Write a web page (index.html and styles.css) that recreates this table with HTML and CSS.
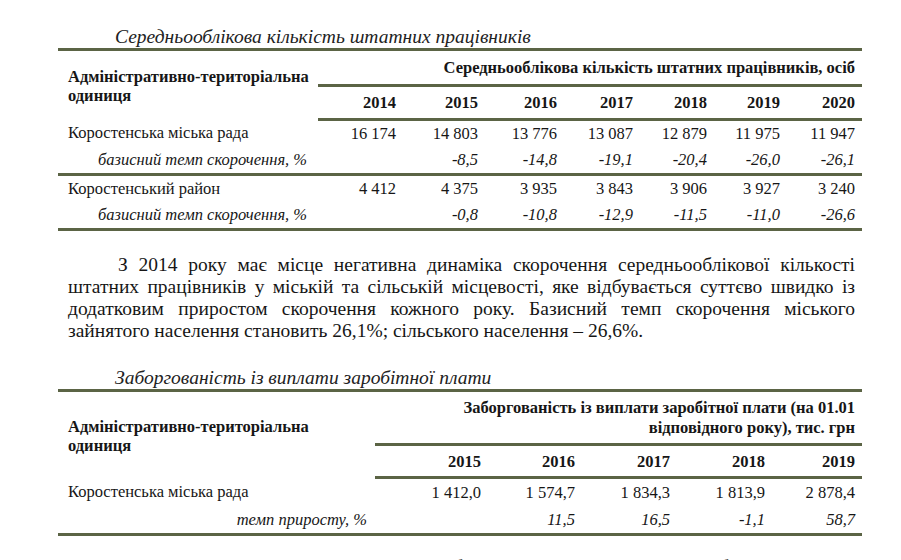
FILE: index.html
```html
<!DOCTYPE html>
<html lang="uk">
<head>
<meta charset="utf-8">
<title>Таблиці</title>
<link rel="stylesheet" href="styles.css">
</head>
<body>
<div class="page">
  <div class="caption cap1">Середньооблікова кількість штатних працівників</div>
  <table class="tbl t1">
    <colgroup>
      <col class="c-unit1">
      <col style="width:85px"><col style="width:82px"><col style="width:79px"><col style="width:76px"><col style="width:74px"><col style="width:73px"><col style="width:75px">
    </colgroup>
    <thead>
      <tr class="h1">
        <th class="unit" rowspan="2">Адміністративно-територіальна<br>одиниця</th>
        <th class="group" colspan="7">Середньооблікова кількість штатних працівників, осіб</th>
      </tr>
      <tr class="h2">
        <th>2014</th><th>2015</th><th>2016</th><th>2017</th><th>2018</th><th>2019</th><th>2020</th>
      </tr>
    </thead>
    <tbody>
      <tr class="r">
        <td class="name">Коростенська міська рада</td>
        <td>16 174</td><td>14 803</td><td>13 776</td><td>13 087</td><td>12 879</td><td>11 975</td><td>11 947</td>
      </tr>
      <tr class="r sub sep">
        <td class="name">базисний темп скорочення, %</td>
        <td></td><td>-8,5</td><td>-14,8</td><td>-19,1</td><td>-20,4</td><td>-26,0</td><td>-26,1</td>
      </tr>
      <tr class="r">
        <td class="name">Коростенський район</td>
        <td>4 412</td><td>4 375</td><td>3 935</td><td>3 843</td><td>3 906</td><td>3 927</td><td>3 240</td>
      </tr>
      <tr class="r sub last">
        <td class="name">базисний темп скорочення, %</td>
        <td></td><td>-0,8</td><td>-10,8</td><td>-12,9</td><td>-11,5</td><td>-11,0</td><td>-26,6</td>
      </tr>
    </tbody>
  </table>

  <div class="para">
    <span class="ln first">З 2014 року має місце негативна динаміка скорочення середньооблікової кількості</span>
    <span class="ln">штатних працівників у міській та сільській місцевості, яке відбувається суттєво швидко із</span>
    <span class="ln">додатковим приростом скорочення кожного року. Базисний темп скорочення міського</span>
    <span class="ln end">зайнятого населення становить 26,1%; сільського населення – 26,6%.</span>
  </div>

  <div class="caption cap2">Заборгованість із виплати заробітної плати</div>
  <table class="tbl t2">
    <colgroup>
      <col class="c-unit2">
      <col style="width:113px"><col style="width:94px"><col style="width:95px"><col style="width:95px"><col style="width:90px">
    </colgroup>
    <thead>
      <tr class="h1">
        <th class="unit" rowspan="2">Адміністративно-територіальна<br>одиниця</th>
        <th class="group" colspan="5">Заборгованість із виплати заробітної плати (на 01.01<br>відповідного року), тис. грн</th>
      </tr>
      <tr class="h2">
        <th>2015</th><th>2016</th><th>2017</th><th>2018</th><th>2019</th>
      </tr>
    </thead>
    <tbody>
      <tr class="r">
        <td class="name">Коростенська міська рада</td>
        <td>1 412,0</td><td>1 574,7</td><td>1 834,3</td><td>1 813,9</td><td>2 878,4</td>
      </tr>
      <tr class="r sub last">
        <td class="name right">темп приросту, %</td>
        <td></td><td>11,5</td><td>16,5</td><td>-1,1</td><td>58,7</td>
      </tr>
    </tbody>
  </table>

  <div class="para tail">
    <span class="ln first">Протягом досліджуваного періоду заборгованість із виплати заробітної плати у</span>
  </div>
</div>
</body>
</html>
```

FILE: styles.css
```css
html, body {
  margin: 0;
  padding: 0;
  background: #ffffff;
}
body {
  font-family: "Liberation Serif", "Tinos", "Times New Roman", serif;
  color: #161616;
  height: 560px;
  overflow: hidden;
}
.page {
  width: 804px;
  padding: 26px 0 0 58px;
}
.caption {
  font-style: italic;
  font-size: 19.5px;
  line-height: 22px;
  height: 22px;
  padding-left: 57px;
  color: #222;
}
.cap2 {
  margin-top: 25px;
}
.tbl {
  width: 804px;
  border-collapse: collapse;
  table-layout: fixed;
  border-top: 3px solid #5b6445;
  font-size: 16.5px;
}
.c-unit1 { width: 260px; }
.c-unit2 { width: 317px; }
.tbl th {
  font-weight: bold;
  font-size: 16.5px;
  text-align: right;
  padding: 0 7px 0 0;
  line-height: 19px;
}
.tbl th.unit {
  text-align: left;
  padding-left: 10px;
  vertical-align: middle;
  line-height: 19px;
  padding-top: 2px;
}
.tbl th.group {
  border-bottom: 3px solid #5b6445;
  line-height: 20px;
  vertical-align: middle;
}
.t1 .h1 { height: 36px; }
.t1 .h2 { height: 34px; }
.t2 .h1 { height: 54px; }
.t2 .h2 { height: 33px; }
.tbl .h2 th {
  border-bottom: 3px solid #5b6445;
}
.tbl td {
  text-align: right;
  padding: 0 7px 0 0;
  line-height: 20px;
  height: 26px;
  white-space: nowrap;
}
.t2 td {
  height: 27px;
}
.tbl td.name {
  text-align: left;
  padding-left: 10px;
}
.tbl tr.sub td {
  font-style: italic;
}
.tbl tr.sub td.name {
  padding-left: 40px;
}
.tbl tr.sub td.name.right {
  text-align: right;
  padding-left: 0;
  padding-right: 8px;
}
.tbl tr.sep td,
.tbl tr.last td {
  border-bottom: 3px solid #5b6445;
}
.para {
  margin: 23px 0 0 10px;
  width: 787px;
  font-size: 19.5px;
  line-height: 22px;
}
.para .ln {
  display: block;
  text-align: justify;
  text-align-last: justify;
  white-space: nowrap;
}
.para .ln.first {
  text-indent: 50px;
}
.para .ln.end {
  text-align-last: left;
}
.para.tail {
  margin-top: 20px;
}
```
